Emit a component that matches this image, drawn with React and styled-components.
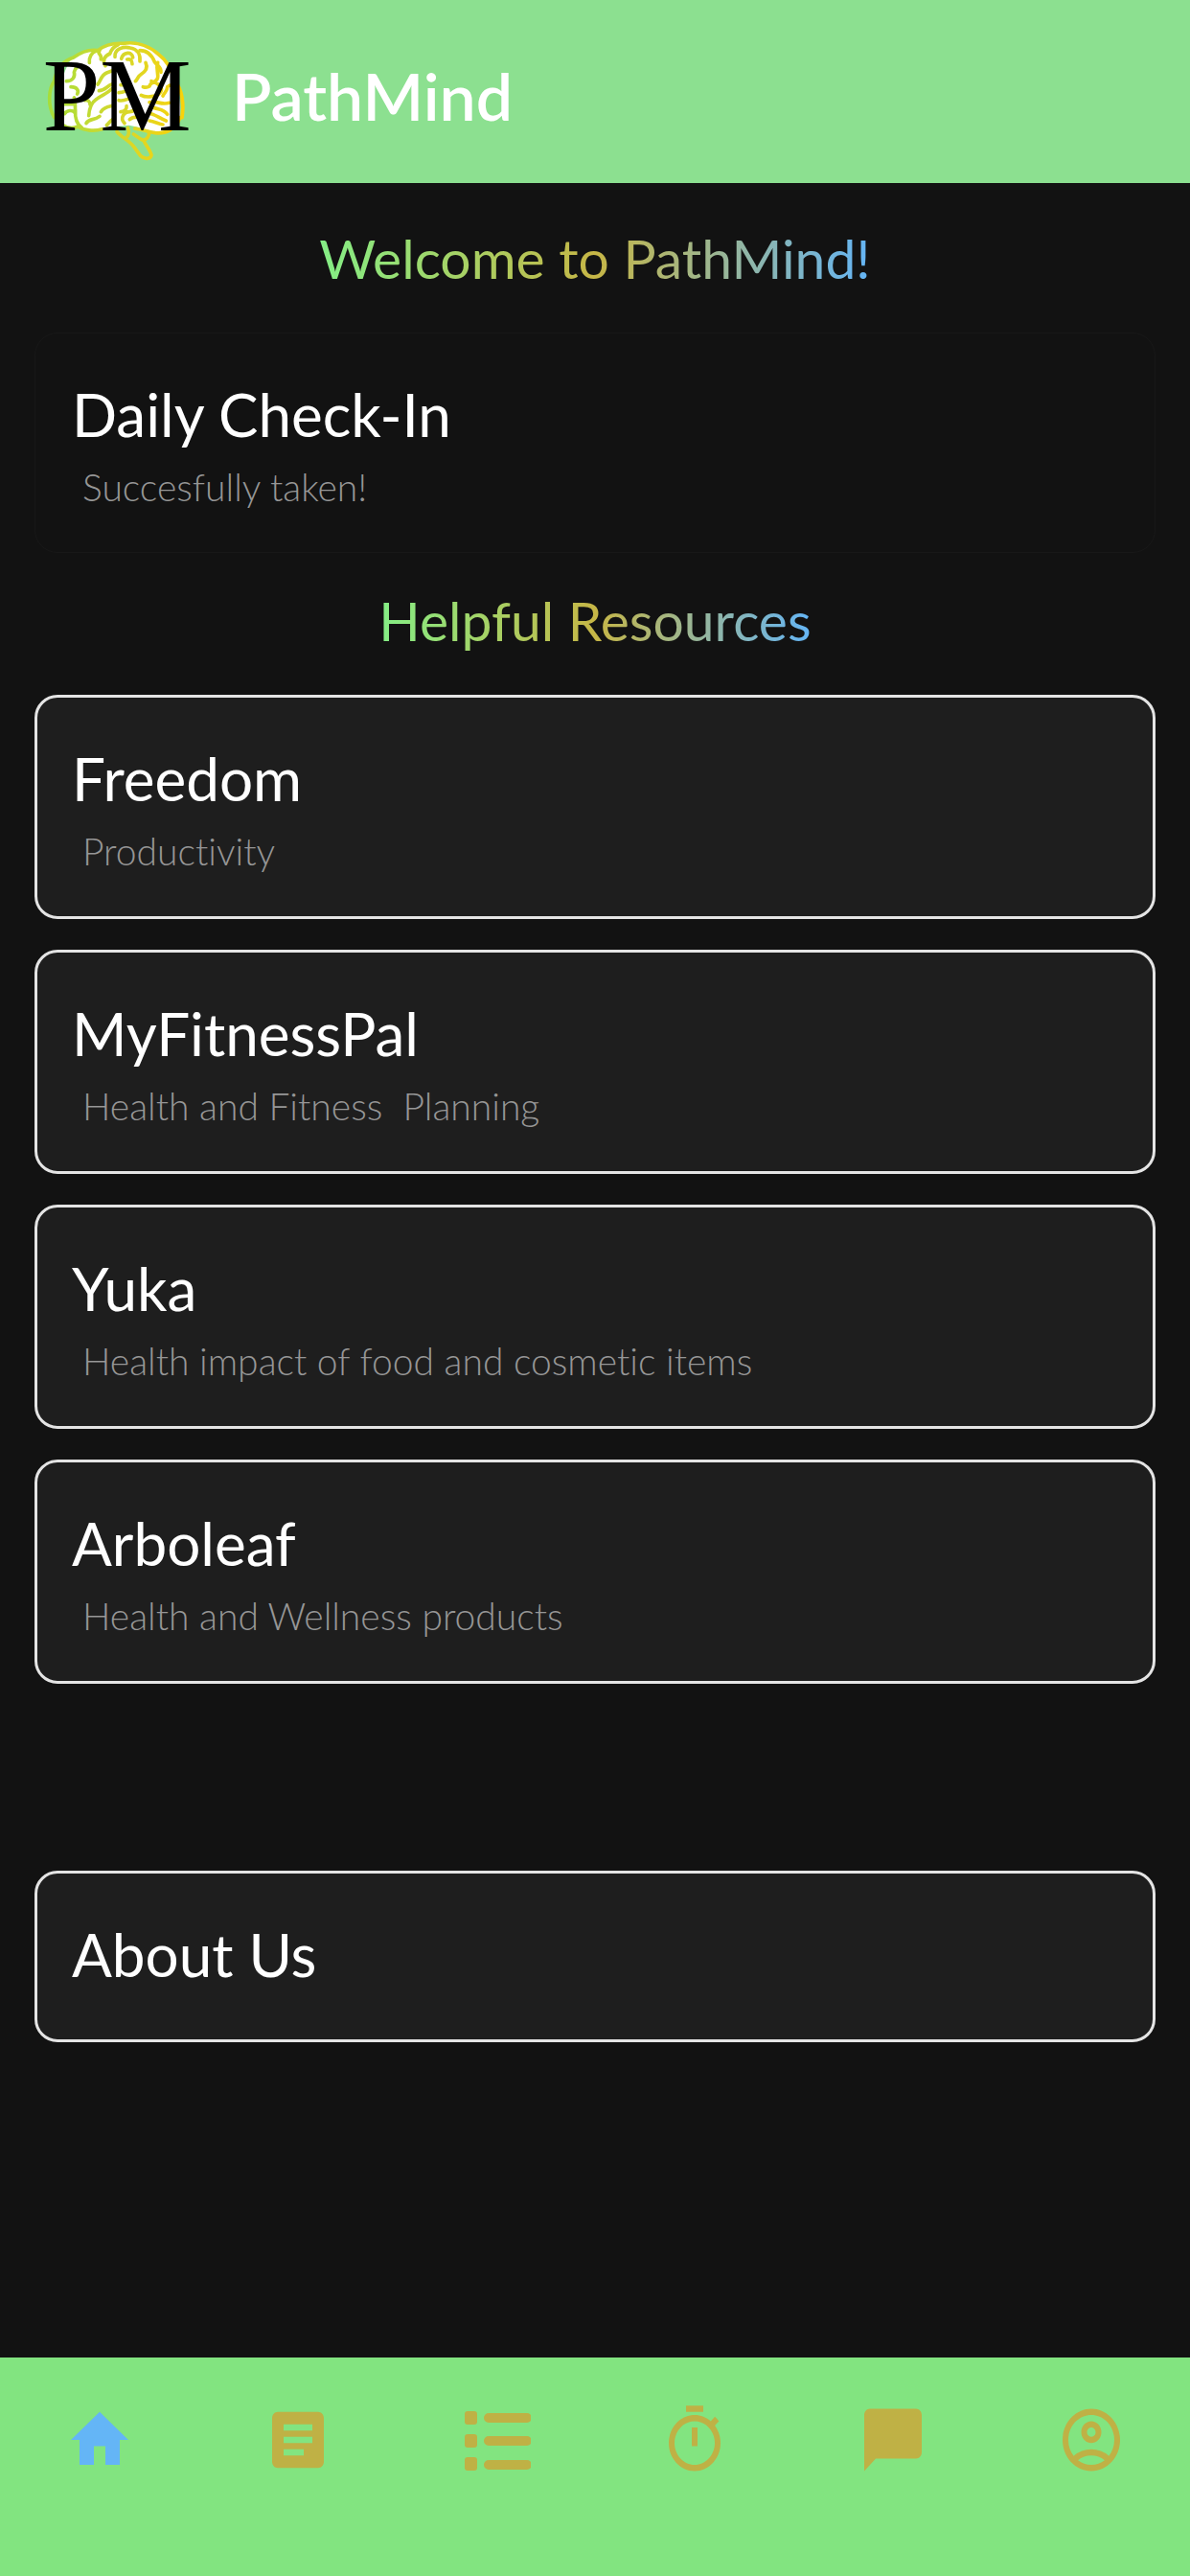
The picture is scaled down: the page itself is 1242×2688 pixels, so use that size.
import React from 'react';
import styled, { createGlobalStyle } from 'styled-components';

const GlobalStyle = createGlobalStyle`
    body {
        margin: 0;
        background: #121212;
        font-family: Lato, "Open Sans", sans-serif;
        font-variant-ligatures: none;
    }
`;
const Page = styled.div`
    display: flex;
    flex-direction: column;
    min-height: 100vh;
`;
const Header = styled.header`
    display: flex;
    align-items: flex-start;
    gap: 42px;
    padding: 40px 44px 23px;
    background: #8ce090;
`;
const Logo = styled.svg`
    display: block;
    width: 156px;
    height: 128px;
`;
const LogoText = styled.text`
    font-family: "Liberation Serif", serif;
    font-size: 322px;
    fill: #000;
`;
const Brand = styled.h1`
    margin: 20px 0 0;
    font-size: 68px;
    font-weight: 600;
    line-height: 80px;
    color: #fff;
`;
const Content = styled.main`
    display: flex;
    flex: 1;
    flex-direction: column;
    padding: 44px 36px;
`;
const Heading = styled.h2`
    align-self: center;
    margin: 0 0 44px;
    font-size: 57px;
    font-weight: 400;
    line-height: 68px;
    color: transparent;
    background: linear-gradient(90deg, #84ee86, #c6b646 50%, #64b5f6);
    background-clip: text;
`;
const DailyCheckIn = styled.section`
    margin-bottom: 36px;
    padding: 48px 38px 44px;
    border: 1px solid #181818;
    border-radius: 24px;
`;
const Resources = styled.div`
    display: flex;
    flex-direction: column;
    gap: 32px;
    margin-bottom: 195px;
`;
const Card = styled.a`
    display: block;
    padding: 48px 36px ${props => (props.$compact ? '52px' : '44px')};
    border: 3px solid #e4e4e4;
    border-radius: 24px;
    background: #1e1e1e;
    text-decoration: none;
`;
const CardTitle = styled.h3`
    margin: 0;
    font-size: 62px;
    font-weight: 400;
    line-height: 73px;
    color: #fff;
`;
const CardText = styled.p`
    margin: 15px 0 0 11px;
    font-size: 39px;
    font-weight: 300;
    line-height: 48px;
    white-space: pre-wrap;
    color: #969696;
`;
const TabBar = styled.nav`
    display: grid;
    grid-template-columns: repeat(6, 1fr);
    justify-items: center;
    padding: 47px 0 103px;
    background: #82e480;
`;
const Tab = styled.button`
    padding: 0;
    border: 0;
    background: none;
    color: ${props => (props.$active ? '#64b5f6' : '#bfb145')};
    cursor: pointer;
`;
const TabIcon = styled.svg`
    display: block;
    width: 72px;
    height: 78px;
    fill: currentColor;
`;

const resources = [
    { title: 'Freedom', text: 'Productivity' },
    { title: 'MyFitnessPal', text: 'Health and Fitness  Planning' },
    { title: 'Yuka', text: 'Health impact of food and cosmetic items' },
    { title: 'Arboleaf', text: 'Health and Wellness products' },
];

const tabs = [
    { label: 'Home', path: 'M10 20v-6h4v6h5v-8h3L12 3 2 12h3v8z' },
    {
        label: 'Journal',
        path: 'M19 3H5c-1.1 0-2 .9-2 2v14c0 1.1.9 2 2 2h14c1.1 0 2-.9 2-2V5c0-1.1-.9-2-2-2zm-5 14H7v-2h7v2zm3-4H7v-2h10v2zm0-4H7V7h10v2z',
    },
    {
        label: 'List',
        viewBox: '0 0 72 78',
        path: 'M6 9h7q3 0 3 3v8q0 3-3 3H6q-3 0-3-3v-8q0-3 3-3zM6 33h7q3 0 3 3v8q0 3-3 3H6q-3 0-3-3v-8q0-3 3-3zM6 57h7q3 0 3 3v8q0 3-3 3H6q-3 0-3-3v-8q0-3 3-3zM28 11h40a5 5 0 0 1 0 10H28a5 5 0 0 1 0-10zM28 35h40a5 5 0 0 1 0 10H28a5 5 0 0 1 0-10zM28 60h40a5 5 0 0 1 0 10H28a5 5 0 0 1 0-10z',
    },
    {
        label: 'Timer',
        path: 'M15 1H9v2h6V1zm-4 13h2V8h-2v6zm8.03-6.61l1.42-1.42c-.43-.51-.9-.99-1.41-1.41l-1.42 1.42C16.07 4.74 14.12 4 12 4c-4.97 0-9 4.03-9 9s4.02 9 9 9 9-4.03 9-9c0-2.12-.74-4.07-1.97-5.61zM12 20c-3.87 0-7-3.13-7-7s3.13-7 7-7 7 3.13 7 7-3.13 7-7 7z',
    },
    { label: 'Chat', path: 'M20 2H4c-1.1 0-2 .9-2 2v18l4-4h14c1.1 0 2-.9 2-2V4c0-1.1-.9-2-2-2z' },
    {
        label: 'Account',
        path: 'M12 2C6.48 2 2 6.48 2 12s4.48 10 10 10 10-4.48 10-10S17.52 2 12 2zM7.35 18.5C8.66 17.56 10.26 17 12 17s3.34.56 4.65 1.5c-1.31.94-2.91 1.5-4.65 1.5s-3.34-.56-4.65-1.5zm10.79-1.38a9.947 9.947 0 0 0-12.28 0A7.957 7.957 0 0 1 4 12c0-4.42 3.58-8 8-8s8 3.58 8 8c0 1.95-.7 3.73-1.86 5.12zM12 6c-1.93 0-3.5 1.57-3.5 3.5S10.07 13 12 13s3.5-1.57 3.5-3.5S13.93 6 12 6zm0 5c-.83 0-1.5-.67-1.5-1.5S11.17 8 12 8s1.5.67 1.5 1.5S12.83 11 12 11z',
    },
];

const BrainLogo = () => (
    <Logo viewBox="138 120 468 384" role="img" aria-label="PM">
        <defs>
            <linearGradient id="brain" gradientUnits="userSpaceOnUse" x1="160" y1="300" x2="585" y2="300">
                <stop offset="0" stopColor="#a6de3a" />
                <stop offset="0.5" stopColor="#d4d82e" />
                <stop offset="1" stopColor="#fad20a" />
            </linearGradient>
        </defs>
        <path
            d="M200 388C190 350 185 240 232 182C262 164 290 158 312 160C335 142 362 136 392 137C430 134 468 144 500 172C530 196 545 230 552 260C568 290 572 330 570 366C556 402 520 416 490 412C465 406 440 398 410 392C385 394 350 398 320 408C290 410 268 404 250 396C230 402 210 398 200 388Z"
            fill="#fff"
        />
        <g fill="none" stroke="url(#brain)" strokeWidth="11" strokeLinecap="round" strokeLinejoin="round">
            <path d="M176 368C154 330 158 278 176 254C182 214 206 190 236 180C262 162 290 154 312 158C335 140 362 134 392 136C430 130 470 142 500 168C530 190 545 216 552 254C578 278 582 330 576 368" />
            <path d="M570 368C556 406 524 420 492 416C472 412 450 406 428 402M200 390C216 402 232 404 250 396C268 408 300 412 326 404" />
            <path d="M372 412C386 430 408 438 424 458L446 488C458 500 478 498 480 486C476 468 462 456 456 440M400 432C412 424 410 410 406 400M424 420C440 430 452 444 462 436C470 430 474 422 472 414" />
            <path d="M214 254C234 254 242 240 238 226C242 210 252 206 262 206M228 272C246 272 254 282 248 294" />
            <path d="M286 196C284 178 294 164 306 160M318 158C308 170 326 168 322 186M336 206C326 190 332 176 350 168M350 168C356 152 364 144 376 140M366 178C364 154 390 144 414 150C438 154 446 172 444 192" />
            <path d="M386 184C392 162 420 160 422 180M404 186C414 184 420 188 420 200M444 158C466 158 482 174 490 194C500 208 512 210 510 226" />
            <path d="M462 196C470 212 462 224 446 234C436 240 438 248 430 254M500 196C492 220 506 234 498 248C488 262 476 258 474 270C468 274 460 274 454 272M480 254C496 258 506 264 510 276" />
            <path d="M312 264C322 252 322 236 340 228L356 222M316 284C334 284 340 270 356 264M356 278C344 292 320 300 306 312C294 320 286 332 284 362M272 314C282 312 288 318 288 328M322 350C334 332 352 334 362 330" />
            <path d="M206 326H232M238 306C244 322 240 330 242 346C240 372 246 388 262 400M208 356C216 344 232 344 240 352M276 386C284 370 300 378 318 364M340 392C350 382 352 378 358 374" />
            <path d="M384 266C396 268 406 260 414 266M378 290C400 290 406 276 422 286M378 314C400 320 410 302 430 306M384 350C396 350 404 340 402 332M396 386C380 370 394 350 412 350C424 350 432 340 432 332M412 374C430 358 448 372 462 368" />
            <path d="M448 298C462 306 490 304 504 294C512 288 512 278 510 272M474 320C496 314 510 330 536 322M516 300C520 290 530 286 530 272M536 268C552 262 552 280 564 286M484 336C504 344 518 340 530 358M470 354C490 356 504 370 526 378M474 378C490 380 506 390 516 390M550 296C552 324 568 330 560 352" />
        </g>
        <LogoText x="140" y="408">PM</LogoText>
    </Logo>
);

const App = () => (
    <Page>
        <GlobalStyle />
        <Header>
            <BrainLogo />
            <Brand>PathMind</Brand>
        </Header>

        <Content>
            <Heading>Welcome to PathMind!</Heading>
            <DailyCheckIn>
                <CardTitle>Daily Check-In</CardTitle>
                <CardText>Succesfully taken!</CardText>
            </DailyCheckIn>

            <Heading>Helpful Resources</Heading>
            <Resources>
                {resources.map(({ title, text }) => (
                    <Card key={title} href={`#${title.toLowerCase()}`}>
                        <CardTitle>{title}</CardTitle>
                        <CardText>{text}</CardText>
                    </Card>
                ))}
            </Resources>

            <Card href="#about" $compact>
                <CardTitle>About Us</CardTitle>
            </Card>
        </Content>

        <TabBar>
            {tabs.map(({ label, path, viewBox = '0 0 24 24' }, index) => (
                <Tab key={label} type="button" aria-label={label} $active={index === 0}>
                    <TabIcon viewBox={viewBox} preserveAspectRatio="none" aria-hidden="true">
                        <path d={path} />
                    </TabIcon>
                </Tab>
            ))}
        </TabBar>
    </Page>
);

export default App;
